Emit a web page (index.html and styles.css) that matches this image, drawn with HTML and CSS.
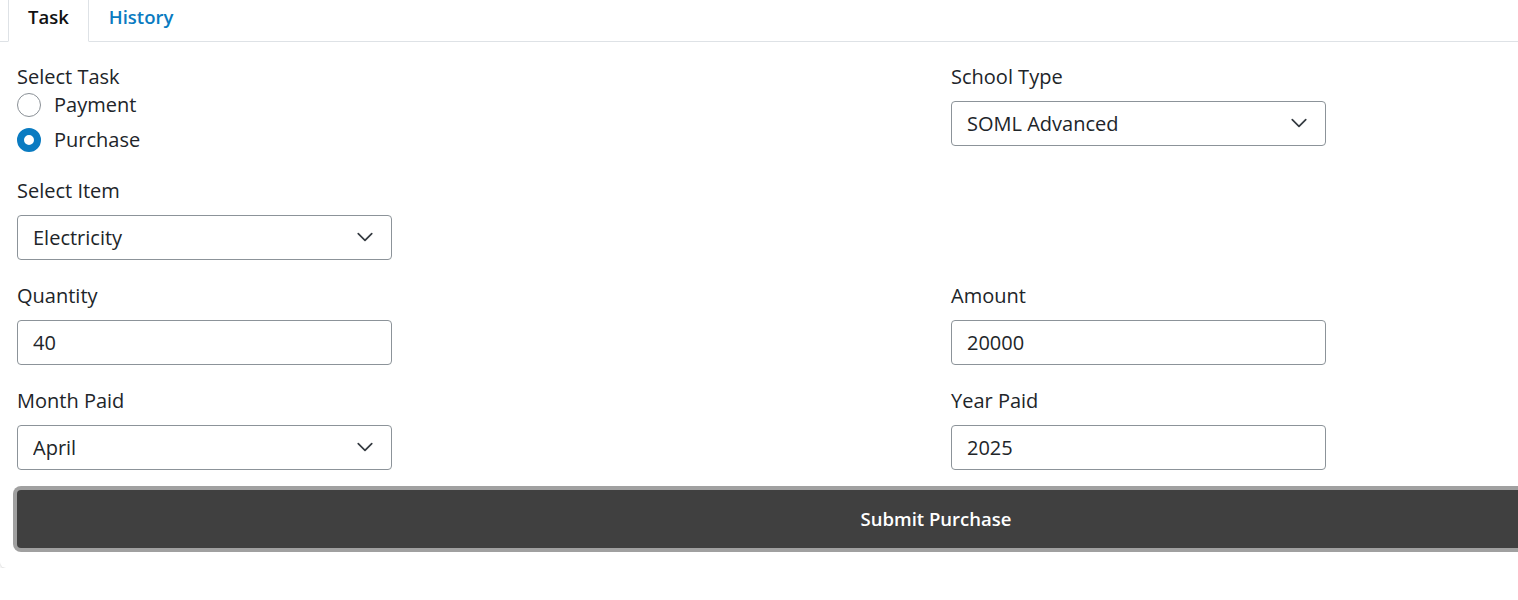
FILE: index.html
```html
<!DOCTYPE html>
<html lang="en">
<head>
<meta charset="utf-8">
<title>Task</title>
<link rel="stylesheet" href="styles.css">
</head>
<body>
<div class="card">
  <ul class="tabs">
    <li class="tab active">Task</li>
    <li class="tab">History</li>
  </ul>
  <form class="card-body">
    <div class="form-grid">
      <div class="group">
        <div class="label tight">Select Task</div>
        <label class="radio-row">
          <input type="radio" name="task" class="radio">
          <span>Payment</span>
        </label>
        <label class="radio-row">
          <input type="radio" name="task" class="radio" checked>
          <span>Purchase</span>
        </label>
      </div>
      <div class="group">
        <label class="label" for="school">School Type</label>
        <div class="select-wrap">
          <select id="school" class="control select"><option>SOML Advanced</option></select>
          <svg class="chev" viewBox="0 0 16 16" width="18" height="18"><path d="M2 5l6 6 6-6" fill="none" stroke="#343a40" stroke-width="1.5" stroke-linecap="round" stroke-linejoin="round"/></svg>
        </div>
      </div>
      <div class="group">
        <label class="label" for="item">Select Item</label>
        <div class="select-wrap">
          <select id="item" class="control select"><option>Electricity</option></select>
          <svg class="chev" viewBox="0 0 16 16" width="18" height="18"><path d="M2 5l6 6 6-6" fill="none" stroke="#343a40" stroke-width="1.5" stroke-linecap="round" stroke-linejoin="round"/></svg>
        </div>
      </div>
      <div class="group"></div>
      <div class="group">
        <label class="label" for="qty">Quantity</label>
        <input id="qty" class="control" type="text" value="40">
      </div>
      <div class="group">
        <label class="label" for="amt">Amount</label>
        <input id="amt" class="control" type="text" value="20000">
      </div>
      <div class="group">
        <label class="label" for="month">Month Paid</label>
        <div class="select-wrap">
          <select id="month" class="control select"><option>April</option></select>
          <svg class="chev" viewBox="0 0 16 16" width="18" height="18"><path d="M2 5l6 6 6-6" fill="none" stroke="#343a40" stroke-width="1.5" stroke-linecap="round" stroke-linejoin="round"/></svg>
        </div>
      </div>
      <div class="group">
        <label class="label" for="year">Year Paid</label>
        <input id="year" class="control" type="text" value="2025">
      </div>
      <button type="button" class="submit">Submit Purchase</button>
    </div>
  </form>
</div>
</body>
</html>
```

FILE: styles.css
```css
html, body {
  margin: 0;
  padding: 0;
  overflow: hidden;
  background: #fff;
}

body {
  font-family: "Open Sans", "Noto Sans", sans-serif;
  color: #212529;
  font-size: 20px;
}

.card {
  width: 1872px;
  margin-top: -10px;
  background: #fff;
  border-radius: 0 0 6px 6px;
  box-shadow: 0 1px 3px rgba(0, 0, 0, 0.18);
}

.tabs {
  list-style: none;
  margin: 0;
  padding: 0 0 0 8px;
  display: flex;
  border-bottom: 1px solid #dee2e6;
}

.tab {
  padding: 11px 19px 9px;
  line-height: 30px;
  font-size: 18.5px;
  font-weight: 600;
  color: #0a7bc1;
  border: 1px solid transparent;
  margin-bottom: -1px;
}

.tab.active {
  color: #111;
  background: #fff;
  border-color: #dee2e6 #dee2e6 #fff;
}

.card-body {
  display: block;
  margin: 0;
  padding: 18px 17px 20px;
}

.form-grid {
  display: grid;
  grid-template-columns: 1fr 1fr;
  column-gap: 30px;
  row-gap: 19px;
  align-items: start;
}

.label {
  display: block;
  line-height: 30px;
  padding-top: 2px;
  margin-bottom: 9px;
}

.label.tight {
  margin-bottom: -2px;
}

.radio-row {
  display: flex;
  align-items: center;
  gap: 13px;
  height: 30px;
  line-height: 30px;
}

.radio-row + .radio-row {
  margin-top: 5px;
}

.radio {
  appearance: none;
  -webkit-appearance: none;
  margin: 0;
  width: 24px;
  height: 24px;
  border-radius: 50%;
  border: 1px solid #8a9096;
  background: #fff;
  box-sizing: border-box;
}

.radio:checked {
  border: 7px solid #0a7bc1;
}

.control {
  display: block;
  box-sizing: border-box;
  width: 375px;
  height: 45px;
  margin: 0;
  padding: 0 15px;
  border: 1px solid #8c9399;
  border-radius: 4px;
  background: #fff;
  font-family: "Open Sans", "Noto Sans", sans-serif;
  font-size: 20px;
  color: #212529;
}

.select {
  appearance: none;
  -webkit-appearance: none;
  padding-right: 45px;
}

.select-wrap {
  position: relative;
  width: 375px;
}

.chev {
  position: absolute;
  right: 18px;
  top: 13px;
  pointer-events: none;
}

.submit {
  grid-column: 1 / -1;
  height: 58px;
  margin-top: 1px;
  padding: 0 0 2px;
  background: #404040;
  color: #fff;
  border: none;
  border-radius: 4px;
  box-shadow: 0 0 0 4px #a0a0a0;
  font-family: "Open Sans", "Noto Sans", sans-serif;
  font-size: 18.5px;
  font-weight: 600;
}
```
